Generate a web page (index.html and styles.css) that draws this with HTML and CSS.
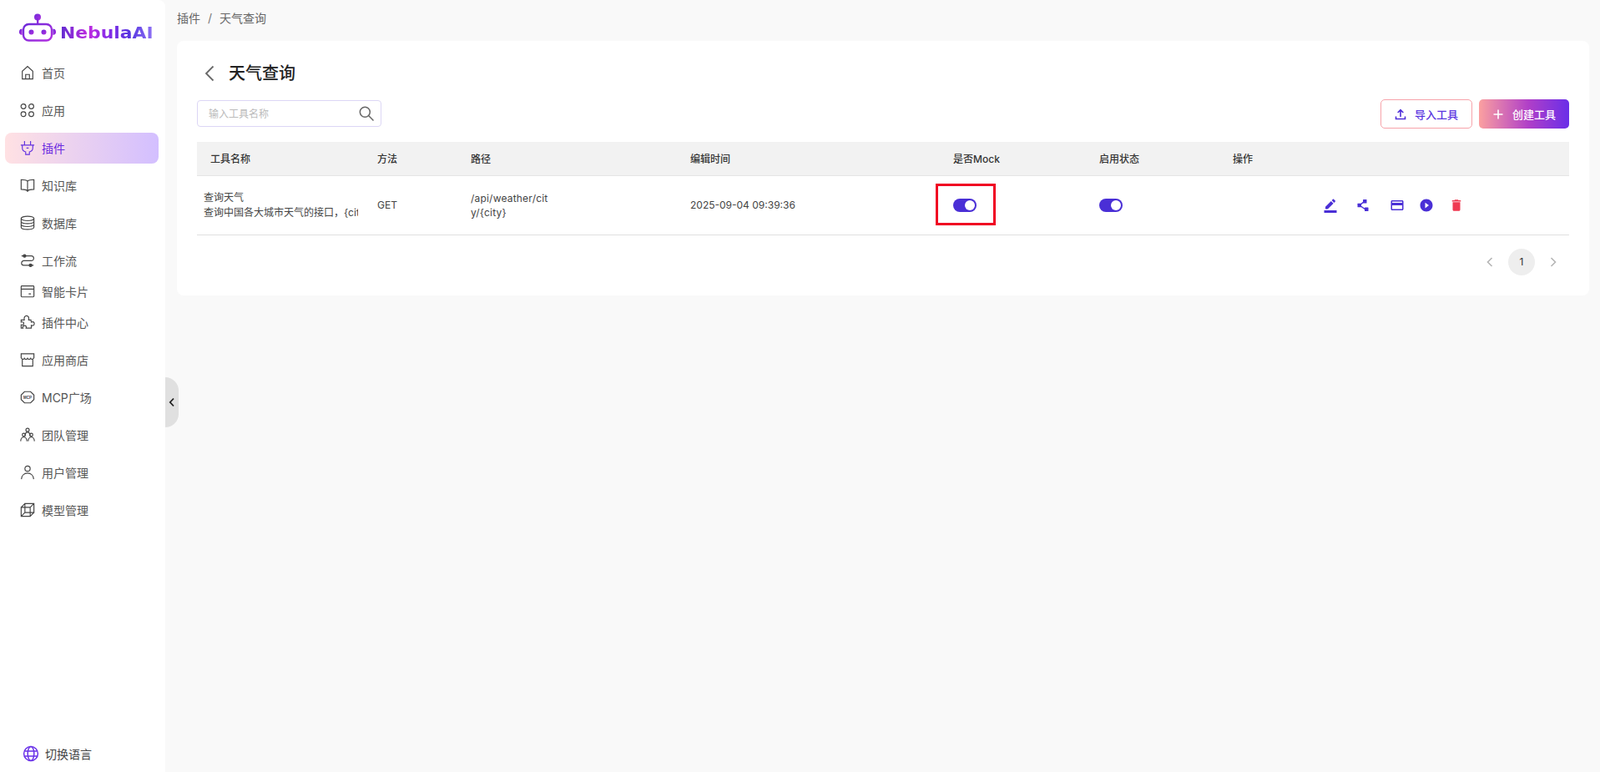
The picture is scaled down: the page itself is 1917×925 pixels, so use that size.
FILE: index.html
```html
<!DOCTYPE html>
<html lang="zh">
<head>
<meta charset="utf-8">
<title>天气查询</title>
<link rel="stylesheet" href="styles.css">
</head>
<body>
<svg class="defs" width="0" height="0" aria-hidden="true">
  <defs>
    <linearGradient id="robot" x1="0" y1="0" x2="1" y2="1">
      <stop offset="0" stop-color="#6d2bd9"/>
      <stop offset="1" stop-color="#b12fe0"/>
    </linearGradient>
  </defs>
</svg>
<div class="app">
  <aside class="sidebar">
    <div class="logo">
      <svg class="logo-mark" width="44" height="34" viewBox="0 0 44 34">
        <circle cx="22" cy="4.500" r="4" fill="url(#robot)"/>
        <rect x="21" y="6" width="2.400" height="7" fill="url(#robot)"/>
        <rect x="5" y="13" width="34" height="19.500" rx="6.500" fill="none" stroke="url(#robot)" stroke-width="2.400"/>
        <circle cx="14.500" cy="22.500" r="3" fill="url(#robot)"/>
        <circle cx="29.500" cy="22.500" r="3" fill="url(#robot)"/>
        <path d="M3.600 18.500a3.600 3.600 0 0 0 0 7.500z" fill="url(#robot)"/>
        <path d="M40.400 18.500a3.600 3.600 0 0 1 0 7.500z" fill="url(#robot)"/>
      </svg>
      <span class="logo-text">NebulaAI</span>
    </div>
    <nav class="nav">
      <a class="nav-item"><svg class="nav-icon" viewBox="0 0 20 20"><path d="M3 18.500V8.200L10 1.800l7 6.400v10.300zM7.500 18.500v-6h5v6"/></svg>首页</a>
      <a class="nav-item"><svg class="nav-icon" viewBox="0 0 20 20"><circle cx="4.500" cy="5" r="3.200"/><circle cx="15" cy="5" r="3.200"/><circle cx="4.500" cy="15.300" r="3.200"/><circle cx="15" cy="15.300" r="3.200"/></svg>应用</a>
      <a class="nav-item active"><svg class="nav-icon" viewBox="0 0 20 20"><path d="M6 1v5.500M14 1v5.500M1 6.500h18M3 6.500v3.500c0 3 2 5 4.500 5.500v3.500h5v-3.500C15 15 17 13 17 10V6.500M8.500 10.500h3"/></svg>插件</a>
      <a class="nav-item"><svg class="nav-icon" viewBox="0 0 20 20"><path d="M10 4.500C8.500 3 5.500 2.500 1.500 2.500v13c4 0 7 .5 8.500 2 1.500-1.500 4.500-2 8.500-2v-13c-4 0-7 .5-8.500 2zM10 4.500V19"/></svg>知识库</a>
      <a class="nav-item"><svg class="nav-icon" viewBox="0 0 20 20"><ellipse cx="10" cy="4.200" rx="8.500" ry="3"/><path d="M1.500 4.200v11.600c0 1.700 3.800 3 8.500 3s8.500-1.300 8.500-3V4.200M1.500 8c0 1.700 3.800 3 8.500 3s8.500-1.300 8.500-3M1.500 12c0 1.700 3.800 3 8.500 3s8.500-1.300 8.500-3"/></svg>数据库</a>
      <a class="nav-item"><svg class="nav-icon" viewBox="0 0 20 20"><path d="M2 4h13a3 3 0 0 1 0 6.500H5a3 3 0 0 0 0 6h13"/><circle class="dot" cx="6" cy="4" r="1.800"/><circle class="dot" cx="14" cy="16.500" r="1.800"/></svg>工作流</a>
      <a class="nav-item tight"><svg class="nav-icon" viewBox="0 0 20 20"><rect x="1.500" y="3" width="17" height="14.500" rx="1"/><path d="M1.500 7h17M11.500 13.500h3"/></svg>智能卡片</a>
      <a class="nav-item tight"><svg class="nav-icon" viewBox="0 0 20 20"><path d="M1.500 7h4.200c-.8-3.500.8-5.500 3-5.500s3.500 2 2.800 5.500h3l.5 3c2.500-.8 4-.2 4 2s-1.500 3-4 2.300V18H8c.8-2.200 0-3.500-2-3.500s-2.800 1.300-2 3.500H1.500v-4.500C4 14 5 13 5 11.500S4 9.300 1.500 10z"/></svg>插件中心</a>
      <a class="nav-item"><svg class="nav-icon" viewBox="0 0 20 20"><path d="M3 9.500V18.500h14V9.500M1.500 2h17v5.500c-1.500 2.500-3.500 2.500-4.300.5-1.200 2-3 2-4.200 0-1.200 2-3 2-4.200 0-.8 2-2.800 2-4.300-.5z"/></svg>应用商店</a>
      <a class="nav-item"><svg class="nav-icon" viewBox="0 0 20 20"><path d="M6 2.500h8l4.500 4.500v6L14 17.500H6L1.500 13V7z"/><text class="mcp-mark" x="10" y="11.800">MCP</text></svg>MCP广场</a>
      <a class="nav-item"><svg class="nav-icon" viewBox="0 0 20 20"><circle cx="10" cy="3.500" r="2.200"/><path d="M6.500 12c.2-3 1.500-5.500 3.500-5.500s3.300 2.500 3.500 5.500"/><circle cx="5" cy="10" r="2"/><circle cx="15" cy="10" r="2"/><path d="M.8 18.500c.2-3 2-5.500 4.200-5.500s4 2.500 4.200 5.500M10.800 18.500c.2-3 2-5.500 4.200-5.500s4 2.500 4.200 5.500"/></svg>团队管理</a>
      <a class="nav-item"><svg class="nav-icon" viewBox="0 0 20 20"><circle cx="10" cy="5" r="3.500"/><path d="M1.800 19c.3-5 3.800-8 8.200-8s7.900 3 8.200 8"/></svg>用户管理</a>
      <a class="nav-item"><svg class="nav-icon" viewBox="0 0 20 20"><path d="M1.500 6.500h12v12h-12zM6.500 1.500h12v12h-12zM1.500 6.500l5-5M13.500 6.500l5-5M1.500 18.500l5-5M13.500 18.500l5-5"/></svg>模型管理</a>
    </nav>
    <div class="lang">
      <svg class="lang-icon" width="20" height="20" viewBox="0 0 20 20"><circle cx="10" cy="10" r="8.400"/><ellipse cx="10" cy="10" rx="3.800" ry="8.400"/><path d="M2.300 7h15.400M2.300 13h15.400"/></svg>
      切换语言
    </div>
    <button class="collapse" type="button" aria-label="收起">
      <svg width="8" height="12" viewBox="0 0 8 12"><path d="M6 1.500 1.800 6 6 10.500"/></svg>
    </button>
  </aside>

  <main class="main">
    <div class="crumbs"><span>插件</span><span class="sep">/</span><span>天气查询</span></div>
    <section class="card">
      <div class="title-row">
        <svg class="back" width="12" height="20" viewBox="0 0 12 20"><path d="M10.500 1.500 2 10l8.500 8.500"/></svg>
        <h1 class="title">天气查询</h1>
      </div>
      <div class="toolbar">
        <label class="search">
          <input class="search-input" placeholder="输入工具名称">
          <svg class="search-icon" width="20" height="20" viewBox="0 0 20 20"><circle cx="8.300" cy="8.300" r="6"/><path d="M12.800 12.800 18.500 18.500"/></svg>
        </label>
        <div class="actions">
          <button class="btn btn-outline" type="button">
            <svg class="btn-icon" width="14" height="14" viewBox="0 0 14 14"><path d="M7 10V2M3.700 5 7 1.700 10.300 5M1.500 9.500v3h11v-3"/></svg>
            导入工具
          </button>
          <button class="btn btn-fill" type="button">
            <svg class="btn-plus" width="14" height="14" viewBox="0 0 14 14"><path d="M7 1.500v11M1.500 7h11"/></svg>
            创建工具
          </button>
        </div>
      </div>
      <table class="table">
        <colgroup>
          <col class="c1"><col class="c2"><col class="c3"><col class="c4"><col class="c5"><col class="c6"><col class="c7">
        </colgroup>
        <thead>
          <tr>
            <th class="first">工具名称</th><th>方法</th><th>路径</th><th>编辑时间</th><th>是否Mock</th><th>启用状态</th><th>操作</th>
          </tr>
        </thead>
        <tbody>
          <tr>
            <td class="name"><div>查询天气</div><div class="clip">查询中国各大城市天气的接口，{city}</div></td>
            <td>GET</td>
            <td><div class="path">/api/weather/city/{city}</div></td>
            <td>2025-09-04 09:39:36</td>
            <td class="mock"><span class="switch"></span><span class="marker"></span></td>
            <td><span class="switch"></span></td>
            <td class="ops">
              <svg class="op op-edit" width="18" height="18" viewBox="0 0 24 24"><path d="M22 24H2v-4h20v4zM13.060 5.190l3.750 3.750L7.750 18H4v-3.750l9.060-9.060zm4.820 2.680-3.750-3.750 1.830-1.830c.39-.39 1.020-.39 1.410 0l2.340 2.340c.39.39.39 1.020 0 1.410l-1.830 1.830z"/></svg>
              <svg class="op op-share" width="16" height="16" viewBox="0 0 16 16"><path class="op-line" d="M10 3 4 8l7 5"/><rect x="8" y="1" width="4.500" height="4.500" rx=".5"/><rect x="1.500" y="5.800" width="4.500" height="4.500" rx=".5"/><rect x="10" y="10.500" width="4.500" height="4.500" rx=".5"/></svg>
              <svg class="op op-card" width="18" height="18" viewBox="0 0 24 24"><path d="M20 4H4c-1.110 0-1.990.89-1.990 2L2 18c0 1.110.89 2 2 2h16c1.110 0 2-.89 2-2V6c0-1.110-.89-2-2-2zm0 14H4v-6h16v6zm0-10H4V6h16v2z"/></svg>
              <svg class="op op-play" width="18" height="18" viewBox="0 0 24 24"><path d="M12 2C6.480 2 2 6.480 2 12s4.480 10 10 10 10-4.480 10-10S17.520 2 12 2zm-2 14.500v-9l6 4.500-6 4.500z"/></svg>
              <svg class="op op-del" width="18" height="18" viewBox="0 0 24 24"><path d="M6 19c0 1.100.9 2 2 2h8c1.100 0 2-.9 2-2V7H6v12zM19 4h-3.500l-1-1h-5l-1 1H5v2h14V4z"/></svg>
            </td>
          </tr>
        </tbody>
      </table>
      <div class="pager">
        <svg class="pg-arrow" width="8" height="12" viewBox="0 0 8 12"><path d="M6.500 1 1.500 6l5 5"/></svg>
        <span class="pg-num">1</span>
        <svg class="pg-arrow" width="8" height="12" viewBox="0 0 8 12"><path d="M1.500 1l5 5-5 5"/></svg>
      </div>
    </section>
  </main>
</div>
</body>
</html>
```
FILE: styles.css
```css
* { box-sizing: border-box; }
html, body { margin: 0; height: 100%; }
body {
  font-family: Inter, "Noto Sans CJK SC", "Liberation Sans", sans-serif;
  font-size: 14px;
  color: #333;
  background: #f9f9f9;
  overflow: hidden;
}
.defs { position: absolute; }
.app { display: flex; height: 925px; }

/* sidebar */
.sidebar {
  position: relative;
  flex: 0 0 198px;
  display: flex;
  flex-direction: column;
  background: #fff;
  border-radius: 0 8px 0 0;
}
.logo { display: flex; align-items: flex-start; height: 41px; margin-top: 16px; padding-left: 23px; gap: 5px; }
.logo-mark { flex: none; }
.logo-text {
  margin-top: 11px;
  font-family: "DejaVu Sans", sans-serif;
  font-weight: 700;
  font-size: 19px;
  line-height: 24px;
  white-space: nowrap;
  transform: scaleX(1.15);
  transform-origin: left center;
  background: linear-gradient(90deg, #5f2bd0 0%, #c02be0 30%, #8a2be8 50%, #5535e0 75%, #8f72f5 100%);
  -webkit-background-clip: text;
  background-clip: text;
  color: transparent;
}
.nav { display: flex; flex-direction: column; padding: 0 8px 0 6px; margin-top: 4px; }
.nav-item {
  display: flex;
  align-items: center;
  gap: 8px;
  height: 37px;
  margin-top: 8px;
  padding: 0 0 2px 18px;
  border-radius: 8px;
  color: #555;
  font-size: 14px;
  white-space: nowrap;
}
.nav-item.tight { margin-top: 0; }
.nav-icon {
  flex: none;
  width: 18px;
  height: 18px;
  fill: none;
  stroke: #444;
  stroke-width: 1.300;
}
.nav-icon .dot { fill: #444; }
.mcp-mark { font-size: 5px; font-weight: 700; fill: #444; stroke: none; text-anchor: middle; font-family: "Liberation Sans", sans-serif; }
.nav-item.active {
  color: #6b2be0;
  background: linear-gradient(90deg, #ffe1e3 0%, #d3bfff 100%);
}
.nav-item.active .nav-icon { stroke: #6533e0; }
.lang {
  display: flex;
  align-items: center;
  gap: 7px;
  margin-top: auto;
  height: 44px;
  padding: 0 0 0 27px;
  color: #444;
}
.lang-icon { fill: none; stroke: #6a32e8; stroke-width: 1.500; }
.collapse {
  position: absolute;
  left: 198px;
  top: 452px;
  width: 16px;
  height: 60px;
  padding: 0;
  border: 0;
  border-radius: 0 16px 16px 0;
  background: #e0e0e0;
  display: flex;
  align-items: center;
  justify-content: center;
}
.collapse svg { fill: none; stroke: #222; stroke-width: 1.800; }

/* main */
.main { flex: 1; min-width: 0; padding: 0 13px 0 14px; }
.crumbs { display: flex; gap: 9px; height: 49px; padding: 13px 0 0; font-size: 14px; line-height: 18px; color: #666; }
.sep { color: #777; }
.card { background: #fff; border-radius: 8px; padding: 24px 24px 16px; height: 305px; }
.title-row { display: flex; align-items: center; gap: 17px; height: 30px; padding-left: 9px; }
.back { fill: none; stroke: #666; stroke-width: 1.800; }
.title { margin: 0; font-size: 20px; font-weight: 500; line-height: 30px; color: #222; }
.toolbar { display: flex; justify-content: space-between; align-items: flex-start; margin-top: 16px; }
.search {
  position: relative;
  display: flex;
  align-items: center;
  width: 221px;
  height: 32px;
  margin-top: 1px;
  border: 1px solid #dcd6f5;
  border-radius: 4px;
}
.search-input {
  flex: 1;
  min-width: 0;
  height: 100%;
  padding: 0 36px 0 13px;
  border: 0;
  background: none;
  outline: none;
  font: 12px Inter, "Noto Sans CJK SC", sans-serif;
}
.search-input::placeholder { color: #bbb; }
.search-icon { position: absolute; right: 7px; top: 5px; fill: none; stroke: #666; stroke-width: 1.500; }
.actions { display: flex; gap: 8px; }
.btn {
  display: flex;
  align-items: center;
  justify-content: center;
  height: 35px;
  padding: 0;
  border-radius: 5px;
  font: 500 13px Inter, "Noto Sans CJK SC", sans-serif;
}
.btn-outline {
  gap: 10px;
  width: 110px;
  border: 1px solid #f7a3aa;
  background: #fff;
  color: #5a35e0;
}
.btn-fill {
  gap: 10px;
  width: 108px;
  border: 0;
  background: linear-gradient(90deg, #fba0a0 0%, #b03fc8 55%, #6a2ee8 100%);
  color: #fff;
}
.btn-icon { fill: none; stroke: #4f2fd8; stroke-width: 1.600; }
.btn-plus { fill: none; stroke: #fff; stroke-width: 1.600; }

/* table */
.table { width: 100%; margin-top: 16px; border-collapse: collapse; table-layout: fixed; font-size: 12px; color: #333; }
.c1 { width: 216px; }
.c2 { width: 112px; }
.c3 { width: 263px; }
.c4 { width: 315px; }
.c5 { width: 175px; }
.c6 { width: 160px; }
th {
  height: 40px;
  padding: 0;
  background: #f2f2f2;
  border-bottom: 1px solid #e4e4e4;
  text-align: left;
  font-weight: 500;
  color: #333;
}
th.first { padding-left: 16px; }
td { height: 71px; padding: 0; border-bottom: 1px solid #e0e0e0; line-height: 17px; color: #444; }
td.name { padding: 1px 24px 0 8px; line-height: 18px; }
.clip { overflow: hidden; white-space: nowrap; width: 185px; }
.path { width: 96px; word-break: break-all; letter-spacing: .2px; }
.mock { position: relative; }
.switch {
  position: relative;
  display: block;
  width: 28px;
  height: 16px;
  border-radius: 8px;
  background: #4a2fd6;
}
.switch::after {
  content: "";
  position: absolute;
  right: 2px;
  top: 2px;
  width: 12px;
  height: 12px;
  border-radius: 50%;
  background: #fff;
}
.marker {
  position: absolute;
  left: -21px;
  top: 9px;
  width: 72px;
  height: 50px;
  border: 3px solid #f00022;
}
.ops { white-space: nowrap; position: relative; }
.op { position: absolute; top: 50%; transform: translateY(-50%); fill: #4a2fd6; }
.op-edit { left: 108px; }
.op-share { left: 148px; }
.op-card { left: 188px; }
.op-play { left: 223px; }
.op-del { left: 259px; fill: #ef3a52; }
.op-line { fill: none; stroke: #4a2fd6; stroke-width: 1.500; }

.pager { display: flex; align-items: center; justify-content: flex-end; gap: 18px; margin-top: 16px; padding-right: 15px; }
.pg-arrow { fill: none; stroke: #b5b5b5; stroke-width: 1.600; }
.pg-num {
  display: flex;
  align-items: center;
  justify-content: center;
  width: 32px;
  height: 32px;
  border-radius: 50%;
  background: #eee;
  font-size: 12px;
  color: #333;
}
```
